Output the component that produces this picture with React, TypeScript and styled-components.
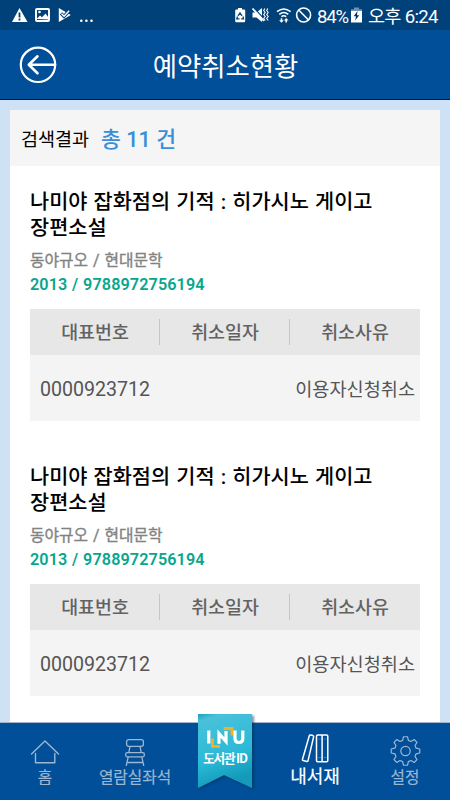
import React from "react";
import styled, { createGlobalStyle } from "styled-components";

const Global = createGlobalStyle`
  * { box-sizing: border-box; }
  body { margin: 0; font-family: Roboto, "Noto Sans CJK KR", sans-serif; }
  svg { display: block; flex: none; }
`;

const Screen = styled.div`
  width: 450px;
  height: 800px;
  display: flex;
  flex-direction: column;
  overflow: hidden;
  background: #cfe1f5;
`;

const StatusBar = styled.div`
  height: 30px;
  flex: none;
  display: flex;
  justify-content: space-between;
  background: #00417a;
  color: #fff;
`;

const StatusClock = styled.div`
  display: flex;
  align-items: center;
  height: 30px;
  line-height: 28px;
  white-space: pre;
`;

const StatusText = styled.span<{ $w: number; $ls?: number; $size: number }>`
  width: ${(p) => p.$w}px;
  flex: none;
  font-size: ${(p) => p.$size}px;
  letter-spacing: ${(p) => p.$ls ?? 0}px;
  padding-top: 3px;
`;

const Header = styled.header`
  height: 70px;
  flex: none;
  display: grid;
  grid-template-columns: 60px 1fr 60px;
  align-items: center;
  background: #004f98;
  border-bottom: 1px solid #00087e;
  color: #fff;
`;

const BackButton = styled.button`
  padding: 0 0 0 19px;
  border: 0;
  background: none;
`;

const HeaderTitle = styled.h1`
  margin: 4px 0 0 1px;
  text-align: center;
  font-size: 26.4px;
  line-height: 40px;
  font-weight: 400;
`;

const Panel = styled.main`
  margin: 10px 10px 0;
  flex: 1;
  min-height: 0;
  overflow: hidden;
  background: #fff;
`;

const ResultBar = styled.div`
  height: 56px;
  padding: 0 0 0 11px;
  display: flex;
  align-items: center;
  background: #f5f5f5;
  font-size: 18.5px;
  color: #000;
`;

const ResultCount = styled.strong`
  margin: 0 0 2px 12px;
  font-size: 21.6px;
  font-weight: 500;
  color: #388fd8;
`;

const Book = styled.article`
  height: 275px;
  padding: 23px 20px 0;
`;

const BookTitle = styled.h2`
  margin: 0;
  width: 360px;
  font-size: 20.8px;
  line-height: 26px;
  font-weight: 500;
  word-spacing: 1px;
  color: #000;
`;

const Author = styled.div`
  margin-top: 8px;
  font-size: 15.8px;
  line-height: 24px;
  height: 24px;
  word-spacing: 1px;
  -webkit-text-stroke: 0.35px #828282;
  color: #828282;
`;

const Isbn = styled.div`
  font-size: 16.2px;
  line-height: 24px;
  height: 26px;
  font-weight: 600;
  word-spacing: 0.6px;
  letter-spacing: 0.1px;
  color: #07a68c;
`;

const TableHead = styled.div`
  margin-top: 10px;
  height: 46px;
  display: grid;
  grid-template-columns: repeat(3, 1fr);
  align-items: center;
  background: #e7e7e7;
`;

const HeadCell = styled.div`
  height: 26px;
  line-height: 27px;
  text-align: center;
  font-size: 18.4px;
  font-weight: 500;
  color: #626262;
  & + & {
    margin-left: -1px;
    border-left: 1px solid #c6c6c6;
  }
`;

const TableRow = styled.div`
  height: 66px;
  padding: 0 5px 1px 10px;
  display: flex;
  justify-content: space-between;
  align-items: center;
  background: #f4f4f4;
  font-size: 18.6px;
  color: #555;
`;

const Code = styled.span`
  padding-top: 3px;
  font-size: 19.6px;
`;

const Nav = styled.nav`
  position: relative;
  height: 78px;
  flex: none;
  display: grid;
  grid-template-columns: repeat(5, 90px);
  background: #004f98;
  border-top: 1px solid #a6b5cc;
`;

const NavItem = styled.div<{ $active?: boolean }>`
  display: flex;
  flex-direction: column;
  align-items: center;
  justify-content: flex-end;
  padding-bottom: ${(p) => (p.$active ? 11 : 10)}px;
  color: ${(p) => (p.$active ? "#fff" : "#9db6d2")};
  font-size: ${(p) => (p.$active ? 18 : 15.7)}px;
  line-height: 24px;
  -webkit-text-stroke: 0.2px currentColor;
`;

const BooksSlot = styled.div`
  padding-bottom: 2px;
`;

const Ribbon = styled.div`
  position: absolute;
  left: 194px;
  top: -9px;
  width: 66px;
  height: 84px;
`;

const RibbonText = styled.span`
  position: absolute;
  left: 0;
  top: 33px;
  width: 62px;
  text-align: center;
  font-size: 12.6px;
  line-height: 22px;
  font-family: "Noto Sans CJK KR", sans-serif;
  font-weight: 700;
  letter-spacing: -1.2px;
  color: #fff;
  white-space: nowrap;
`;

const LeftIcons = () => (
  <svg width="110" height="30" fill="#fff">
    <path d="M19.5 8 L27.5 22 H12 Z" />
    <path d="M19.5 12.5v5M19.5 18.6v1.8" stroke="#00417a" strokeWidth="1.8" />
    <rect x="36" y="9" width="13" height="12" rx="1" fill="none" stroke="#fff" strokeWidth="2" />
    <circle cx="39.5" cy="12" r="1.3" />
    <path d="M36.5 19l3.5-3.5 2 1.7 3.5-3.7 3 4v2z" />
    <path d="M58.8 8 L63 10.5 70.8 15 58.8 22 Z" />
    <path d="M61 13.4l3 3 5-5.6" fill="none" stroke="#00417a" strokeWidth="3.3" />
    <path d="M61.5 13.8l2.6 2.5 5-5.6" fill="none" stroke="#fff" strokeWidth="1.4" />
    <circle cx="81.3" cy="20.8" r="1.3" />
    <circle cx="86.4" cy="20.8" r="1.3" />
    <circle cx="91.5" cy="20.8" r="1.3" />
  </svg>
);

const RightIcons = () => (
  <svg width="84" height="30" viewBox="233 0 84 30" fill="#fff">
    <path d="M238 8h4v1.6h2.2q1 0 1 1V21q0 1.2-1 1.2h-8q-1 0-1-1.2V10.6q0-1 1-1H238z" />
    <path d="M238 16l2-3 2 3M243 16.5l.5 2.3h-2.3M237.5 16.5l-.7 2.3h2.7" fill="none" stroke="#00417a" strokeWidth="1.3" />
    <path d="M252.500 12.500h4l5.500-4.500v14l-5.500-4.500h-4z" />
    <path d="M254.500 8.500l9.500 10.500" stroke="#00417a" strokeWidth="1.200" />
    <path d="M252.500 8.500l11.500 12.500" stroke="#fff" strokeWidth="1.800" />
    <path d="M264.700 8.500l-1 2 1.500 2-1.500 2 1.500 2-1.500 2 1.500 2M267.700 8.500l-1 2 1.500 2-1.500 2 1.500 2-1.500 2 1.500 2" fill="none" stroke="#fff" strokeWidth="1.1" />
    <path d="M277 11.7q6.800-5.500 13.600 0M279.300 14.300q4.500-3.600 9 0M281.400 16.600q2.400-1.800 4.800 0" fill="none" stroke="#fff" strokeWidth="1.5" />
    <path d="M281.500 22.800l-2.400-2.600h1.600v-2h1.600v2h1.500zM286.200 18l2.400 2.500h-1.600v2.100h-1.600v-2.100h-1.500z" />
    <circle cx="303.600" cy="15" r="7" fill="none" stroke="#fff" strokeWidth="1.6" />
    <path d="M298.700 10l9.800 10" stroke="#fff" strokeWidth="1.6" />
  </svg>
);

const BatteryIcon = () => (
  <svg width="14" height="30" viewBox="350 0 14 30">
    <path d="M351 11v-1.700h3V7.500h5v1.800h3V11z" fill="#6f91b3" />
    <path d="M351 11h11v11.500h-11z" fill="#fff" />
    <path d="M357.500 11l-3.800 5.200h2.300l-.8 4.300 4-5.300h-2.300z" fill="#002c58" />
  </svg>
);

const BackIcon = () => (
  <svg width="38" height="38" fill="none" stroke="#fff">
    <circle cx="19" cy="18.800" r="17.200" strokeWidth="2.200" />
    <path d="M36 18.800H10M18.500 10.300l-8.700 8.500 8.700 8.500" strokeWidth="2.600" strokeLinecap="round" strokeLinejoin="round" />
  </svg>
);

const HomeIcon = () => (
  <svg width="30" height="27" fill="none" stroke="#9db6d2" strokeWidth="1.4" strokeLinecap="round" strokeLinejoin="round">
    <path d="M1.5 15L15 2l13.500 13M5.500 14.500v9.300h19.300v-9.300" />
  </svg>
);

const ChairIcon = () => (
  <svg width="20" height="27" fill="none" stroke="#9db6d2" strokeWidth="1.3">
    <rect x="1.600" y=".7" width="16.800" height="6.600" rx="2" />
    <path d="M5 7.300L3.800 13.600M15 7.300l1.200 6.300" />
    <rect x=".7" y="13.600" width="18.600" height="4.200" rx="1.500" />
    <path d="M3.200 17.800L1.200 27M16.800 17.800l2 9.200M2.400 23.500h15.200" />
  </svg>
);

const BooksIcon = () => (
  <svg width="28" height="29" fill="none" stroke="#fff" strokeWidth="1.5" strokeLinejoin="round">
    <path d="M8.300 1.700q.3-.9 1.200-.7l2.400.6q.9.300.7 1.200L7 26.800q-.3.900-1.200.7l-3.600-1q-.9-.3-.7-1.200z" />
    <rect x="15.500" y="1" width="11.300" height="26.800" rx="1.200" />
    <path d="M21.100 1v26.800" />
    <path d="M17 5h3M22.500 5h3M17 23.500h3M22.500 23.500h3" strokeWidth=".5" opacity=".45" />
  </svg>
);

/* Eight teeth spaced evenly about the hub. */
const gearPath = (() => {
  const points: string[] = [];
  for (let i = 0; i < 8; i++) {
    for (const [offset, radius] of [[-15, 11], [-8, 14.4], [8, 14.4], [15, 11]]) {
      const angle = ((i * 45 + offset) * Math.PI) / 180;
      points.push(`${(15.5 + radius * Math.sin(angle)).toFixed(2)} ${(15 - radius * Math.cos(angle)).toFixed(2)}`);
    }
  }
  return `M${points.join("L")}Z`;
})();

const GearIcon = () => (
  <svg width="31" height="30" fill="none" stroke="#9db6d2" strokeWidth="1.2" strokeLinejoin="round">
    <path d={gearPath} />
    <circle cx="15.500" cy="15" r="4.700" />
  </svg>
);

const RibbonArt = () => (
  <svg width="66" height="84">
    <defs>
      <linearGradient id="ribbon" x1="0" y1="0" x2=".25" y2="1">
        <stop offset="0" stopColor="#1b9fba" />
        <stop offset=".1" stopColor="#48c1da" />
        <stop offset=".65" stopColor="#2bb9d8" />
        <stop offset="1" stopColor="#1399b8" />
      </linearGradient>
      <filter id="shade" x="-20%" y="-10%" width="150%" height="130%">
        <feDropShadow dx="2" dy="1.500" stdDeviation="1.300" floodColor="#00264f" floodOpacity=".5" />
      </filter>
    </defs>
    <path d="M4 0h54v74L30 61 4 74z" fill="url(#ribbon)" filter="url(#shade)" />
    <path d="M18.500 24.500v7.800h7.500M29.500 14.500h8.500v7" fill="none" stroke="#f4b124" strokeWidth="2.800" />
    <path d="M14.800 16.500v13M25 29.800V19.500l7 8V17M41 16.500v8.300q0 3.700 3.900 3.700t3.900-3.700v-8.300" fill="none" stroke="#fff" strokeWidth="3.200" />
  </svg>
);

const books = [0, 1].map((id) => ({
  id,
  title: ["나미야 잡화점의 기적 : 히가시노 게이고", "장편소설"],
  author: "동야규오 / 현대문학",
  isbn: "2013 / 9788972756194",
  code: "0000923712",
  reason: "이용자신청취소",
}));

export default function App() {
  return (
    <Screen>
      <Global />
      <StatusBar>
        <LeftIcons />
        <StatusClock>
          <RightIcons />
          <StatusText $w={33} $size={18.5} $ls={-1.2}>84%</StatusText>
          <BatteryIcon />
          <StatusText $w={86} $size={18.6} $ls={-0.7}> 오후 6:24</StatusText>
        </StatusClock>
      </StatusBar>
      <Header>
        <BackButton aria-label="뒤로"><BackIcon /></BackButton>
        <HeaderTitle>예약취소현황</HeaderTitle>
      </Header>
      <Panel>
        <ResultBar>
          검색결과<ResultCount>총 11 건</ResultCount>
        </ResultBar>
        {books.map((b) => (
          <Book key={b.id}>
            <BookTitle>{b.title[0]}<br />{b.title[1]}</BookTitle>
            <Author>{b.author}</Author>
            <Isbn>{b.isbn}</Isbn>
            <TableHead>
              <HeadCell>대표번호</HeadCell>
              <HeadCell>취소일자</HeadCell>
              <HeadCell>취소사유</HeadCell>
            </TableHead>
            <TableRow>
              <Code>{b.code}</Code>
              <span>{b.reason}</span>
            </TableRow>
          </Book>
        ))}
      </Panel>
      <Nav>
        <NavItem><HomeIcon />홈</NavItem>
        <NavItem><ChairIcon />열람실좌석</NavItem>
        <NavItem />
        <NavItem $active><BooksSlot><BooksIcon /></BooksSlot>내서재</NavItem>
        <NavItem><GearIcon />설정</NavItem>
        <Ribbon>
          <RibbonArt />
          <RibbonText>도서관 ID</RibbonText>
        </Ribbon>
      </Nav>
    </Screen>
  );
}
